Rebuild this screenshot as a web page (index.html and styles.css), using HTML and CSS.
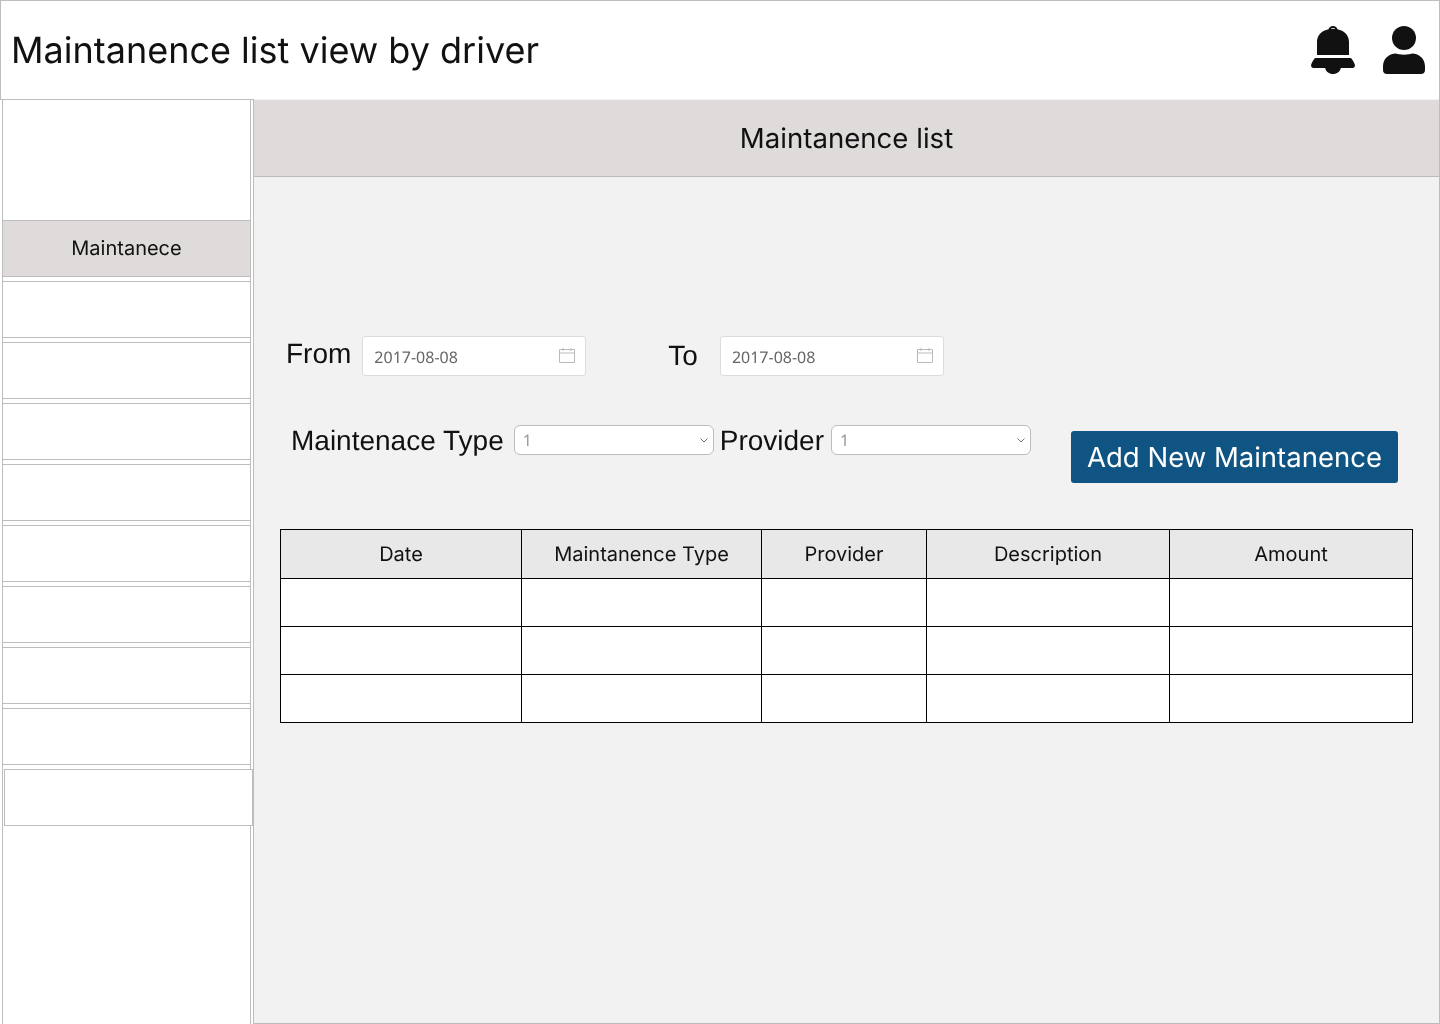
FILE: index.html
```html
<!DOCTYPE html>
<html>
<head>
<title>Maintanence list view by driver</title>
<link rel="stylesheet" href="styles.css">
</head>
<body>
<header class="topbar">
<h1 class="page-title">Maintanence list view by driver</h1>
<div class="top-icons">
<svg class="icon-bell" width="44" height="48" viewBox="0 0 44 48"><path fill="#111" d="M22 0c2.300 0 4 1.300 4.500 3.200C33 4.500 38 9 38 16V29H6V16C6 9 11 4.500 17.500 3.200 18 1.300 19.700 0 22 0ZM22 2c-1 0-1.800.4-2.200 1a14 14 0 0 1 4.400 0C23.800 2.400 23 2 22 2ZM4 32H40C41.500 34 43 36 43.800 38.500 44.300 40.500 43.300 42 41.500 42H29.800C29.300 45.500 26 48 22 48S14.700 45.500 14.200 42H2.500C.7 42-.3 40.500.2 38.500 1 36 2.500 34 4 32Z"/></svg>
<svg class="icon-user" width="42" height="48" viewBox="0 0 42 48"><circle fill="#111" cx="21" cy="12" r="12"/><path fill="#111" d="M13 27.500C16 29 26 29 29 27.500 36.500 27.500 42 33 42 40.500V44C42 46.500 40.500 48 38 48H4C1.500 48 0 46.500 0 44V40.500C0 33 5.500 27.500 13 27.500Z"/></svg>
</div>
</header>
<div class="layout">
<nav class="sidebar">
<div class="side-top"></div>
<div class="side-item active">Maintanece</div>
<div class="side-item"></div>
<div class="side-item"></div>
<div class="side-item"></div>
<div class="side-item"></div>
<div class="side-item"></div>
<div class="side-item"></div>
<div class="side-item"></div>
<div class="side-item"></div>
<div class="side-item shifted"></div>
</nav>
<main class="content">
<div class="content-head">Maintanence list</div>
<div class="filters">
<div class="date-row">
<label class="label label-from">From</label>
<div class="field date-field">
<input class="date-input" type="text" value="2017-08-08">
<svg width="16" height="16" viewBox="0 0 16 16" fill="none" stroke="#bbb" stroke-width="1"><path d="M.5 1.500H15.500V14.500H.5ZM.5 5H15.500M4 0V3M12 0V3"/></svg>
</div>
<label class="label label-to">To</label>
<div class="field date-field">
<input class="date-input" type="text" value="2017-08-08">
<svg width="16" height="16" viewBox="0 0 16 16" fill="none" stroke="#bbb" stroke-width="1"><path d="M.5 1.500H15.500V14.500H.5ZM.5 5H15.500M4 0V3M12 0V3"/></svg>
</div>
</div>
<div class="select-row">
<label class="label label-type">Maintenace Type</label>
<div class="field select-field">
<select class="select-input"><option>1</option></select>
<svg width="8" height="5" viewBox="0 0 8 5" fill="none" stroke="#777" stroke-width="1"><path d="M.5.5 4 4 7.500.5"/></svg>
</div>
<label class="label label-provider">Provider</label>
<div class="field select-field">
<select class="select-input"><option>1</option></select>
<svg width="8" height="5" viewBox="0 0 8 5" fill="none" stroke="#777" stroke-width="1"><path d="M.5.5 4 4 7.500.5"/></svg>
</div>
<button class="add-btn">Add New Maintanence</button>
</div>
</div>
<table class="list-table">
<thead>
<tr><th class="col-date">Date</th><th class="col-type">Maintanence Type</th><th class="col-provider">Provider</th><th class="col-desc">Description</th><th>Amount</th></tr>
</thead>
<tbody>
<tr><td></td><td></td><td></td><td></td><td></td></tr>
<tr><td></td><td></td><td></td><td></td><td></td></tr>
<tr><td></td><td></td><td></td><td></td><td></td></tr>
</tbody>
</table>
</main>
</div>
</body>
</html>
```

FILE: styles.css
```css
* {
box-sizing: border-box;
text-rendering: geometricPrecision;
}
html, body {
height: 100%;
}
body {
margin: 0;
height: 1024px;
overflow: hidden;
color: #111;
font-family: Inter, sans-serif;
}
.topbar {
height: 100px;
border: 1px solid #bdbdbd;
display: flex;
align-items: center;
justify-content: space-between;
padding: 0 14px 0 10px;
will-change: transform;
}
.page-title {
margin: 0;
font-size: 36px;
font-weight: 400;
}
.top-icons {
display: flex;
gap: 28px;
}
.layout {
display: flex;
height: 925px;
margin-top: -1px;
padding-left: 2px;
will-change: transform;
}
.sidebar {
width: 249px;
margin-right: 2px;
border-left: 1px solid #bdbdbd;
border-right: 1px solid #bdbdbd;
border-top: 1px solid #bdbdbd;
}
.side-top {
height: 120px;
}
.side-item {
height: 57px;
margin-bottom: 4px;
border-top: 1px solid #bdbdbd;
border-bottom: 1px solid #bdbdbd;
display: flex;
align-items: center;
justify-content: center;
font-size: 20px;
padding-bottom: 1px;
}
.side-item.active {
background: #dedbda;
}
.side-item.shifted {
margin: 0 -3px 0 1px;
height: 57px;
border: 1px solid #bdbdbd;
background: #fff;
}
.content {
flex: 1;
background: #f2f2f2;
border-left: 1px solid #bdbdbd;
border-bottom: 1px solid #bdbdbd;
border-right: 1px solid #bdbdbd;
padding-top: 1px;
}
.content-head {
height: 77px;
background: #dedbda;
border-bottom: 1px solid #bdbdbd;
display: flex;
align-items: center;
justify-content: center;
font-size: 27.6px;
}
.filters {
height: 352px;
padding-top: 159px;
}
.label {
font-family: "Liberation Sans", sans-serif;
font-size: 28px;
font-weight: 400;
color: #111;
}
.field {
display: flex;
align-items: center;
background: #fff;
}
.date-row {
display: flex;
align-items: center;
height: 40px;
}
.date-field {
width: 224px;
height: 40px;
border: 1px solid #dcdcdc;
border-radius: 3px;
padding-right: 10px;
}
.date-input {
flex: 1;
min-width: 0;
border: 0;
outline: 0;
background: none;
padding: 1px 0 0 11px;
font-family: "Noto Sans", sans-serif;
font-size: 16px;
color: #666;
}
.label-from {
margin: -4px 11px 0 32px;
}
.label-to {
margin: 0 22px 0 82px;
}
.select-row {
display: flex;
align-items: flex-start;
margin-top: 49px;
}
.select-field {
width: 200px;
height: 30px;
border: 1px solid #bdbdbd;
border-radius: 6px;
padding-right: 5px;
}
.select-input {
flex: 1;
min-width: 0;
height: 100%;
border: 0;
outline: 0;
background: none;
appearance: none;
padding: 0 0 0 8px;
font-family: "Noto Sans", sans-serif;
font-size: 16px;
color: #999;
}
.label-type {
margin: 0 10px 0 37px;
}
.label-provider {
margin: 0 7px 0 6px;
}
.add-btn {
width: 327px;
height: 52px;
margin: 6px 0 0 40px;
border: 0;
border-radius: 3px;
background: #0f5482;
color: #fff;
font-family: Inter, sans-serif;
font-size: 27.5px;
padding: 0;
}
.list-table {
width: 1133px;
height: 194px;
margin-left: 26px;
border-collapse: collapse;
table-layout: fixed;
background: #fff;
}
.list-table th, .list-table td {
border: 1px solid #000;
padding: 0;
height: 48px;
}
.list-table th {
height: 49px;
background: #e8e8e8;
font-weight: 400;
font-size: 20px;
color: #111;
}
.col-date {
width: 241px;
}
.col-type {
width: 240px;
}
.col-provider {
width: 165px;
}
.col-desc {
width: 243px;
}
```
